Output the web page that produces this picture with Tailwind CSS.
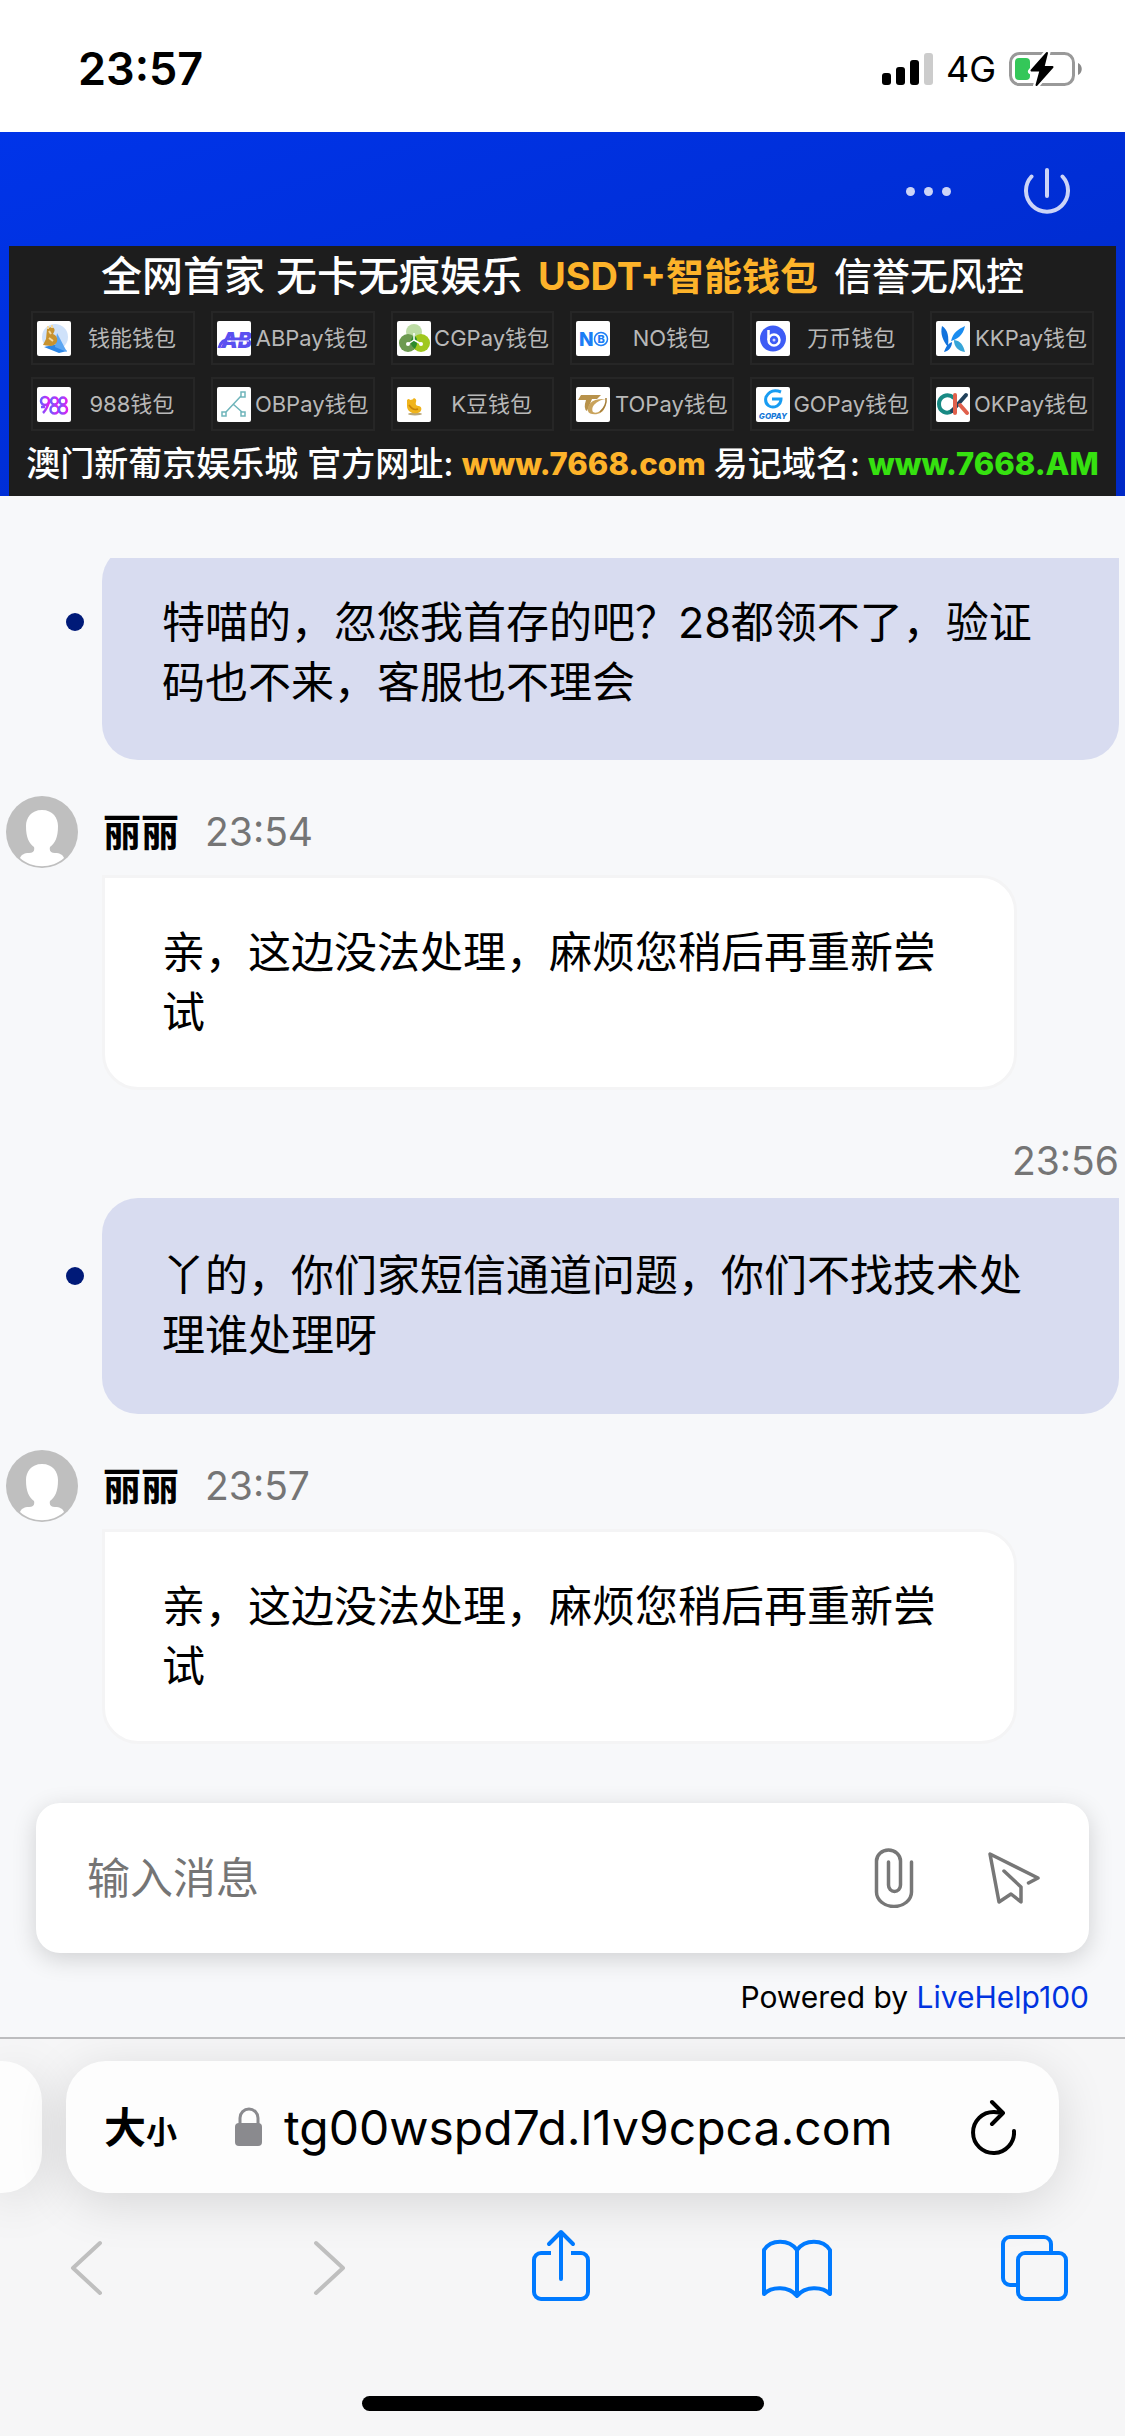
<!DOCTYPE html>
<html lang="zh-CN">
<head>
  <meta charset="UTF-8" />
  <meta name="viewport" content="width=device-width, initial-scale=1.0" />
  <title>LiveHelp100</title>
  <script src="https://cdn.jsdelivr.net/npm/@tailwindcss/browser@4"></script>
</head>
<body class="bg-[#f7f8fa] text-black font-['Inter','Noto_Sans_CJK_SC',sans-serif]">
  <div class="min-h-screen flex flex-col">

    <!-- Status bar -->
    <div class="bg-white h-[132px] pt-[6px] pl-[78px] pr-[41px] flex items-center justify-between">
      <span class="text-[45px] font-semibold">23:57</span>
      <div class="flex items-center gap-3">
        <svg class="w-[52px] h-8" viewBox="0 0 52 32">
          <rect x="0" y="20" width="9" height="12" rx="3" />
          <rect x="14" y="14" width="9" height="18" rx="3" />
          <rect x="28" y="7" width="9" height="25" rx="3" />
          <rect x="42" y="0" width="9" height="32" rx="3" fill="#ccc" />
        </svg>
        <span class="text-[36px]">4G</span>
        <svg class="w-[76px] h-9" viewBox="0 0 76 36">
          <rect x="2.500" y="2.500" width="63" height="31" rx="9" fill="none" stroke="#999" stroke-width="3" />
          <path d="M70 12c5 2 5 10 0 12z" fill="#8a8a8a" />
          <rect x="7" y="7" width="15" height="22" rx="4" fill="#34c759" />
          <path d="M39.500 1 23 20.500h9L28 35l17-20h-9z" stroke="#fff" stroke-width="6" stroke-linejoin="round" />
          <path d="M39 2 23.500 19.500h9L28.500 34 44.500 16h-9z" stroke="#000" stroke-width="2" stroke-linejoin="round" />
        </svg>
      </div>
    </div>

    <!-- Chat header -->
    <header class="bg-linear-to-br from-[#0034e9] to-[#0029c6] px-[9px]">
      <div class="h-[114px] pt-1 pr-[46px] flex items-center justify-end gap-[73px]">
        <button type="button" aria-label="更多">
          <svg class="w-[45px] h-[9px]" viewBox="0 0 45 9" fill="#ccd4f7">
            <circle cx="4.500" cy="4.500" r="4.500" /><circle cx="22.500" cy="4.500" r="4.500" /><circle cx="40.500" cy="4.500" r="4.500" />
          </svg>
        </button>
        <button type="button" aria-label="结束会话">
          <svg class="w-[46px] h-[46px]" viewBox="0 0 46 46" fill="none" stroke="#ccd4f7" stroke-width="4" stroke-linecap="round">
            <path d="M23 2v26M7.500 8.500a21 21 0 1 0 31 0" />
          </svg>
        </button>
      </div>

      <!-- Banner -->
      <div class="bg-[#1d1d1d] h-[250px] pt-[3px] text-white">
        <div class="h-[62px] flex items-start justify-center gap-4 leading-[54px] whitespace-nowrap font-medium">
          <span class="text-[41px]">全网首家 无卡无痕娱乐</span>
          <span class="text-[38px] font-bold text-[#fdb32a]">USDT+智能钱包</span>
          <span class="text-[38px]">信誉无风控</span>
        </div>
        <ul class="grid grid-cols-6 gap-x-4 gap-y-3 px-[22px] text-[22px] text-[#b8b8b8] whitespace-nowrap">
          <li class="h-[54px] border-2 border-[#262626] pl-1 flex items-center">
            <svg class="w-[34px] h-[35px] shrink-0" viewBox="0 0 34 35">
              <rect width="34" height="35" rx="2" fill="#fff" />
              <circle cx="18" cy="16" r="13" fill="#cfe2fa" />
              <path d="M7 26l14-3 9 7-8 2z" fill="#2c86e6" /><path d="M20 12l10 19-12-5z" fill="#5ba6f2" />
              <path d="M10 8c6-4 10 0 6 5 6 2 6 11-2 12l-8-1 3-6z" fill="#c8932f" />
              <path d="M12 10l2 3M12 17l4 3M11 5v3M15 4v3" stroke="#f3d9a0" stroke-width="2" />
            </svg>
            <span class="flex-1 text-center">钱能钱包</span>
          </li>
          <li class="h-[54px] border-2 border-[#262626] pl-1 flex items-center">
            <svg class="w-[34px] h-[35px] shrink-0" viewBox="0 0 34 35">
              <rect width="34" height="35" rx="2" fill="#fff" />
              <text x="4" y="27" font-size="21" font-weight="900" font-style="italic" fill="#5a50f0">AB</text>
              <path d="M2 27q2-9 12-9h18" fill="none" stroke="#5a50f0" stroke-width="3" /><path d="M10 20h22" stroke="#fff" stroke-width="1" />
            </svg>
            <span class="flex-1 text-center">ABPay钱包</span>
          </li>
          <li class="h-[54px] border-2 border-[#262626] pl-1 flex items-center">
            <svg class="w-[34px] h-[35px] shrink-0" viewBox="0 0 34 35">
              <rect width="34" height="35" rx="2" fill="#fff" />
              <circle cx="17" cy="11" r="8" fill="#bcdca4" /><circle cx="11" cy="22" r="9" fill="#6c9a50" /><circle cx="24" cy="22" r="9" fill="#a0c81e" />
              <path d="M17 14q6 5 1 14-8-6-1-14z" fill="#2d8b2c" />
              <path d="M17 19l-6 4M17 19l7 4M17 12v8" stroke="#fff" stroke-width="1.500" />
              <circle cx="11" cy="23" r="2" fill="#fff" /><circle cx="24" cy="23" r="2" fill="#fff" />
            </svg>
            <span class="flex-1 text-center">CGPay钱包</span>
          </li>
          <li class="h-[54px] border-2 border-[#262626] pl-1 flex items-center">
            <svg class="w-[34px] h-[35px] shrink-0" viewBox="0 0 34 35">
              <rect width="34" height="35" rx="2" fill="#fff" />
              <text x="3" y="25" font-size="19" font-weight="800" fill="#1c7df5">N</text>
              <circle cx="25" cy="18" r="6.500" fill="#fff" stroke="#1c7df5" stroke-width="1.500" />
              <text x="21.500" y="22" font-size="11" font-weight="800" fill="#1c7df5">B</text>
            </svg>
            <span class="flex-1 text-center">NO钱包</span>
          </li>
          <li class="h-[54px] border-2 border-[#262626] pl-1 flex items-center">
            <svg class="w-[34px] h-[35px] shrink-0" viewBox="0 0 34 35">
              <rect width="34" height="35" rx="2" fill="#fff" />
              <circle cx="17" cy="17.500" r="13" fill="#3d5cf5" />
              <circle cx="18" cy="19" r="5.500" fill="none" stroke="#fff" stroke-width="2.500" />
              <path d="M12.500 19V9" stroke="#fff" stroke-width="2.500" /><circle cx="18" cy="19" r="1.500" fill="#cfd6ff" />
            </svg>
            <span class="flex-1 text-center">万币钱包</span>
          </li>
          <li class="h-[54px] border-2 border-[#262626] pl-1 flex items-center">
            <svg class="w-[34px] h-[35px] shrink-0" viewBox="0 0 34 35">
              <rect width="34" height="35" rx="2" fill="#fff" />
              <path d="M6 5c6 4 7 10 6 21C7 20 4 13 6 5z" fill="#1273dd" />
              <path d="M29 5c-2 10-8 13-14 15 2-9 8-12 14-15z" fill="#1a8cf0" />
              <path d="M18 19c7 1 9 5 11 12-7-1-11-5-11-12z" fill="#36a5d8" /><path d="M8 31c2-6 4-8 8-10 0 5-3 9-8 10z" fill="#1273dd" />
            </svg>
            <span class="flex-1 text-center">KKPay钱包</span>
          </li>
          <li class="h-[54px] border-2 border-[#262626] pl-1 flex items-center">
            <svg class="w-[34px] h-[35px] shrink-0" viewBox="0 0 34 35">
              <defs><linearGradient id="violet"><stop offset="0" stop-color="#6a5cff" /><stop offset="1" stop-color="#e020f0" /></linearGradient></defs>
              <rect width="34" height="35" rx="2" fill="#fff" />
              <g fill="none" stroke="url(#violet)" stroke-width="2.500">
                <circle cx="8" cy="14" r="4" /><circle cx="17.500" cy="14" r="3.500" /><circle cx="26" cy="14" r="3.500" />
                <path d="M12 15q-2 7-6 11M4 20h4" /><circle cx="17.500" cy="22.500" r="4" /><circle cx="26" cy="22.500" r="4" />
              </g>
            </svg>
            <span class="flex-1 text-center">988钱包</span>
          </li>
          <li class="h-[54px] border-2 border-[#262626] pl-1 flex items-center">
            <svg class="w-[34px] h-[35px] shrink-0" viewBox="0 0 34 35">
              <rect width="34" height="35" rx="2" fill="#fff" />
              <g fill="none" stroke="#6fb5bb" stroke-width="1.500">
                <path d="M24 9 9 25M16 17l9 8" /><rect x="24" y="5" width="4" height="5" /><rect x="5" y="25" width="4" height="4" /><rect x="24" y="25" width="4" height="4" />
              </g>
            </svg>
            <span class="flex-1 text-center">OBPay钱包</span>
          </li>
          <li class="h-[54px] border-2 border-[#262626] pl-1 flex items-center">
            <svg class="w-[34px] h-[35px] shrink-0" viewBox="0 0 34 35">
              <rect width="34" height="35" rx="2" fill="#fff" />
              <ellipse cx="18" cy="27" rx="7" ry="1.500" fill="#b9a77a" />
              <path d="M10 13q2-2 3 0 3 0 4-2 3 1 2 4c-1 3 1 4 3 4 3 1 3 4 1 6-4 3-13 1-13-6z" fill="#f0b41c" />
              <path d="M12 18q4 6 9 4" fill="none" stroke="#c98508" stroke-width="1.500" />
            </svg>
            <span class="flex-1 text-center">K豆钱包</span>
          </li>
          <li class="h-[54px] border-2 border-[#262626] pl-1 flex items-center">
            <svg class="w-[34px] h-[35px] shrink-0" viewBox="0 0 34 35">
              <rect width="34" height="35" rx="2" fill="#fff" />
              <path d="M5 8h20l-4 4h-5l-5 12q-4-2-1-11H2z" fill="#b8924a" />
              <path d="M30 12C15 11 11 18 12 24c1 5 16 5 17-5-4 6-9 8-12 6-3-6 5-12 13-13z" fill="#c9a35c" /><path d="M30 11q1 8-6 14" fill="none" stroke="#a57e38" stroke-width="1.500" />
            </svg>
            <span class="flex-1 text-center">TOPay钱包</span>
          </li>
          <li class="h-[54px] border-2 border-[#262626] pl-1 flex items-center">
            <svg class="w-[34px] h-[35px] shrink-0" viewBox="0 0 34 35">
              <rect width="34" height="35" rx="2" fill="#fff" />
              <path d="M25 5Q15 1 10 10c-2 8 5 12 11 9 3-2 4-4 4-7h-9" fill="none" stroke="#189cf2" stroke-width="3" />
              <text x="17" y="32" text-anchor="middle" font-size="8" font-weight="800" font-style="italic" fill="#1478d8">GOPAY</text>
            </svg>
            <span class="flex-1 text-center">GOPay钱包</span>
          </li>
          <li class="h-[54px] border-2 border-[#262626] pl-1 flex items-center">
            <svg class="w-[34px] h-[35px] shrink-0" viewBox="0 0 34 35">
              <rect width="34" height="35" rx="2" fill="#fff" />
              <path d="M18 11C11 5 3 10 3 17s8 12 14 6" fill="none" stroke="#188a84" stroke-width="4" /><path d="M16 24l14-16" stroke="#20405a" stroke-width="4" stroke-linecap="round" />
              <path d="M19 8v18M24 18l7 8" stroke="#e0604c" stroke-width="4" stroke-linecap="round" />
            </svg>
            <span class="flex-1 text-center">OKPay钱包</span>
          </li>
        </ul>
        <div class="pt-[6px] flex justify-center gap-2 leading-[54px] text-[34px] font-medium whitespace-nowrap">
          <span>澳门新葡京娱乐城 官方网址:</span>
          <a href="#" class="text-[31px] font-extrabold text-[#fdb32a]">www.7668.com</a>
          <span>易记域名:</span>
          <a href="#" class="text-[31px] font-extrabold text-[#36e110]">www.7668.AM</a>
        </div>
      </div>
    </header>

    <!-- Messages -->
    <main class="flex-1 mt-[62px] px-[6px] overflow-hidden text-[43px] leading-[60px]">
      <div class="-mt-[13px] pl-[60px] flex gap-[18px]">
        <span class="mt-[68px] size-[18px] shrink-0 rounded-full bg-[#001a78]"></span>
        <p class="flex-1 h-[215px] px-[60px] pt-[47px] rounded-[36px] rounded-tr-none bg-[#d8dcf0]">特喵的，忽悠我首存的吧？28都领不了，验证码也不来，客服也不理会</p>
      </div>

      <div class="mt-9 flex items-center">
        <svg class="size-[72px]" viewBox="0 0 72 72">
          <circle cx="36" cy="36" r="36" fill="#bfbfbf" />
          <path d="M36 14c-11 0-16 8-16 16 0 12 3 17 8 21 1 4-1 6-5 6-5 0-8 2-9 5 12 11 32 11 44 0-1-3-4-5-9-5-4 0-6-2-5-6 5-4 8-9 8-21 0-8-5-16-16-16z" fill="#fff" />
        </svg>
        <span class="ml-[25px] text-[38px] font-bold">丽丽</span>
        <time class="ml-[26px] text-[39px] text-[#757575]">23:54</time>
      </div>
      <p class="ml-24 mr-[102px] mt-[7px] h-[215px] pl-[57px] pr-[57px] pt-[44px] border-3 border-[#f4f4f5] rounded-[36px] rounded-tl-none bg-white">亲，这边没法处理，麻烦您稍后再重新尝试</p>

      <time class="block mt-[41px] mb-[7px] text-right text-[39px] text-[#757575]">23:56</time>
      <div class="pl-[60px] flex gap-[18px]">
        <span class="mt-[69px] size-[18px] shrink-0 rounded-full bg-[#001a78]"></span>
        <p class="flex-1 h-[216px] px-[60px] pt-[47px] rounded-[36px] rounded-tr-none bg-[#d8dcf0]">丫的，你们家短信通道问题，你们不找技术处理谁处理呀</p>
      </div>

      <div class="mt-9 flex items-center">
        <svg class="size-[72px]" viewBox="0 0 72 72">
          <circle cx="36" cy="36" r="36" fill="#bfbfbf" />
          <path d="M36 14c-11 0-16 8-16 16 0 12 3 17 8 21 1 4-1 6-5 6-5 0-8 2-9 5 12 11 32 11 44 0-1-3-4-5-9-5-4 0-6-2-5-6 5-4 8-9 8-21 0-8-5-16-16-16z" fill="#fff" />
        </svg>
        <span class="ml-[25px] text-[38px] font-bold">丽丽</span>
        <time class="ml-[26px] text-[39px] text-[#757575]">23:57</time>
      </div>
      <p class="ml-24 mr-[102px] mt-[7px] h-[215px] pl-[57px] pr-[57px] pt-[44px] border-3 border-[#f4f4f5] rounded-[36px] rounded-tl-none bg-white">亲，这边没法处理，麻烦您稍后再重新尝试</p>
    </main>

    <!-- Composer -->
    <form class="px-9">
      <div class="h-[150px] pl-[51px] pr-[48px] flex items-center rounded-[24px] bg-white shadow-[0_6px_24px_rgba(0,0,0,0.16)]">
        <input type="text" aria-label="输入消息" placeholder="输入消息" class="flex-1 min-w-0 text-[43px] outline-none placeholder:text-[#757575]" />
        <button type="button" aria-label="附件">
          <svg class="w-10 h-[60px]" viewBox="0 0 40 60" fill="none" stroke="#777" stroke-width="3.500" stroke-linecap="round">
            <path d="M37.500 14v30a17.500 14.500 0 0 1-35 0V13a12 11 0 0 1 24 0v24a6 6.500 0 0 1-12 0V14" />
          </svg>
        </button>
        <button type="submit" aria-label="发送" class="ml-[73px]">
          <svg class="w-[54px] h-[54px]" viewBox="0 0 54 54" fill="none" stroke="#777" stroke-width="3.500" stroke-linecap="round" stroke-linejoin="round">
            <path d="M41.500 32 51 27 3 3l9 48 12-8 10 8V36L17 20" />
          </svg>
        </button>
      </div>
      <p class="pt-6 pb-5 text-right text-[30px] leading-10">Powered by <a href="#" class="text-[#0033e0]">LiveHelp100</a></p>
    </form>

    <!-- Browser toolbar -->
    <footer class="h-[399px] border-t-2 border-[#bdbdbf] bg-[#f6f6f7] overflow-hidden">
      <div class="mt-[22px] flex gap-6">
        <div class="w-[42px] rounded-r-[40px] bg-[#fdfdfd] shadow-[0_10px_50px_rgba(0,0,0,0.13)]"></div>
        <div class="flex-1 mr-[66px] h-[132px] pl-[38px] pr-[43px] flex items-center rounded-[40px] bg-[#fdfdfd] shadow-[0_10px_50px_rgba(0,0,0,0.13)]">
          <button type="button" class="flex items-baseline font-bold text-[42px]">大<span class="text-[31px]">小</span></button>
          <svg class="ml-[58px] w-7 h-10" viewBox="0 0 28 40">
            <path d="M5 18V11a9 9 0 0 1 18 0v7" fill="none" stroke="#8a8a8e" stroke-width="3" /><rect x="0" y="16" width="27" height="23" rx="4" fill="#8a8a8e" />
          </svg>
          <span class="ml-[21px] pt-[2px] flex-1 text-[48px]">tg00wspd7d.l1v9cpca.com</span>
          <button type="button" aria-label="重新加载">
            <svg class="w-[46px] h-[56px]" viewBox="0 0 46 56" fill="none" stroke="#000" stroke-width="4" stroke-linecap="round" stroke-linejoin="round">
              <path d="M33 14 24 13A20.500 20.500 0 1 0 44 32M22 3l11 11-11 11" />
            </svg>
          </button>
        </div>
      </div>
      <div class="mt-[36px] pl-[52px] pr-[57px] flex justify-between">
        <button type="button" aria-label="后退">
          <svg class="w-[68px] h-[74px]" viewBox="0 0 68 74" fill="none" stroke="#bfbfbf" stroke-width="4" stroke-linecap="round" stroke-linejoin="round"><path d="M48 14 21 39l27 25" /></svg>
        </button>
        <button type="button" aria-label="前进">
          <svg class="w-[68px] h-[74px]" viewBox="0 0 68 74" fill="none" stroke="#bfbfbf" stroke-width="4" stroke-linecap="round" stroke-linejoin="round"><path d="M29 14l27 25-27 25" /></svg>
        </button>
        <button type="button" aria-label="分享">
          <svg class="w-[68px] h-[74px]" viewBox="0 0 68 74" fill="none" stroke="#007aff" stroke-width="4" stroke-linejoin="round">
            <path d="M29 24H19a7 7 0 0 0-7 7v32a7 7 0 0 0 7 7h40a7 7 0 0 0 7-7V31a7 7 0 0 0-7-7H49" /><path d="M39 50V3M27 15l12-12 12 12" stroke-linecap="round" />
          </svg>
        </button>
        <button type="button" aria-label="书签">
          <svg class="w-[76px] h-[74px]" viewBox="0 0 76 74" fill="none" stroke="#007aff" stroke-width="4" stroke-linejoin="round"><path d="M40 21C32 10 14 10 7 21v44c8-8 25-8 33 2 8-10 25-10 33-2V21C66 10 48 10 40 21zM40 21v46" /></svg>
        </button>
        <button type="button" aria-label="标签页">
          <svg class="w-[68px] h-[74px]" viewBox="0 0 68 74" fill="none" stroke="#007aff" stroke-width="4">
            <rect x="18" y="24" width="48" height="46" rx="7" /><path d="M18 56h-8a7 7 0 0 1-7-7V15a7 7 0 0 1 7-7h34a7 7 0 0 1 7 7v9" />
          </svg>
        </button>
      </div>
      <div class="mt-[93px] mx-auto w-[402px] h-[15px] rounded-full bg-black"></div>
    </footer>
  </div>
</body>
</html>
